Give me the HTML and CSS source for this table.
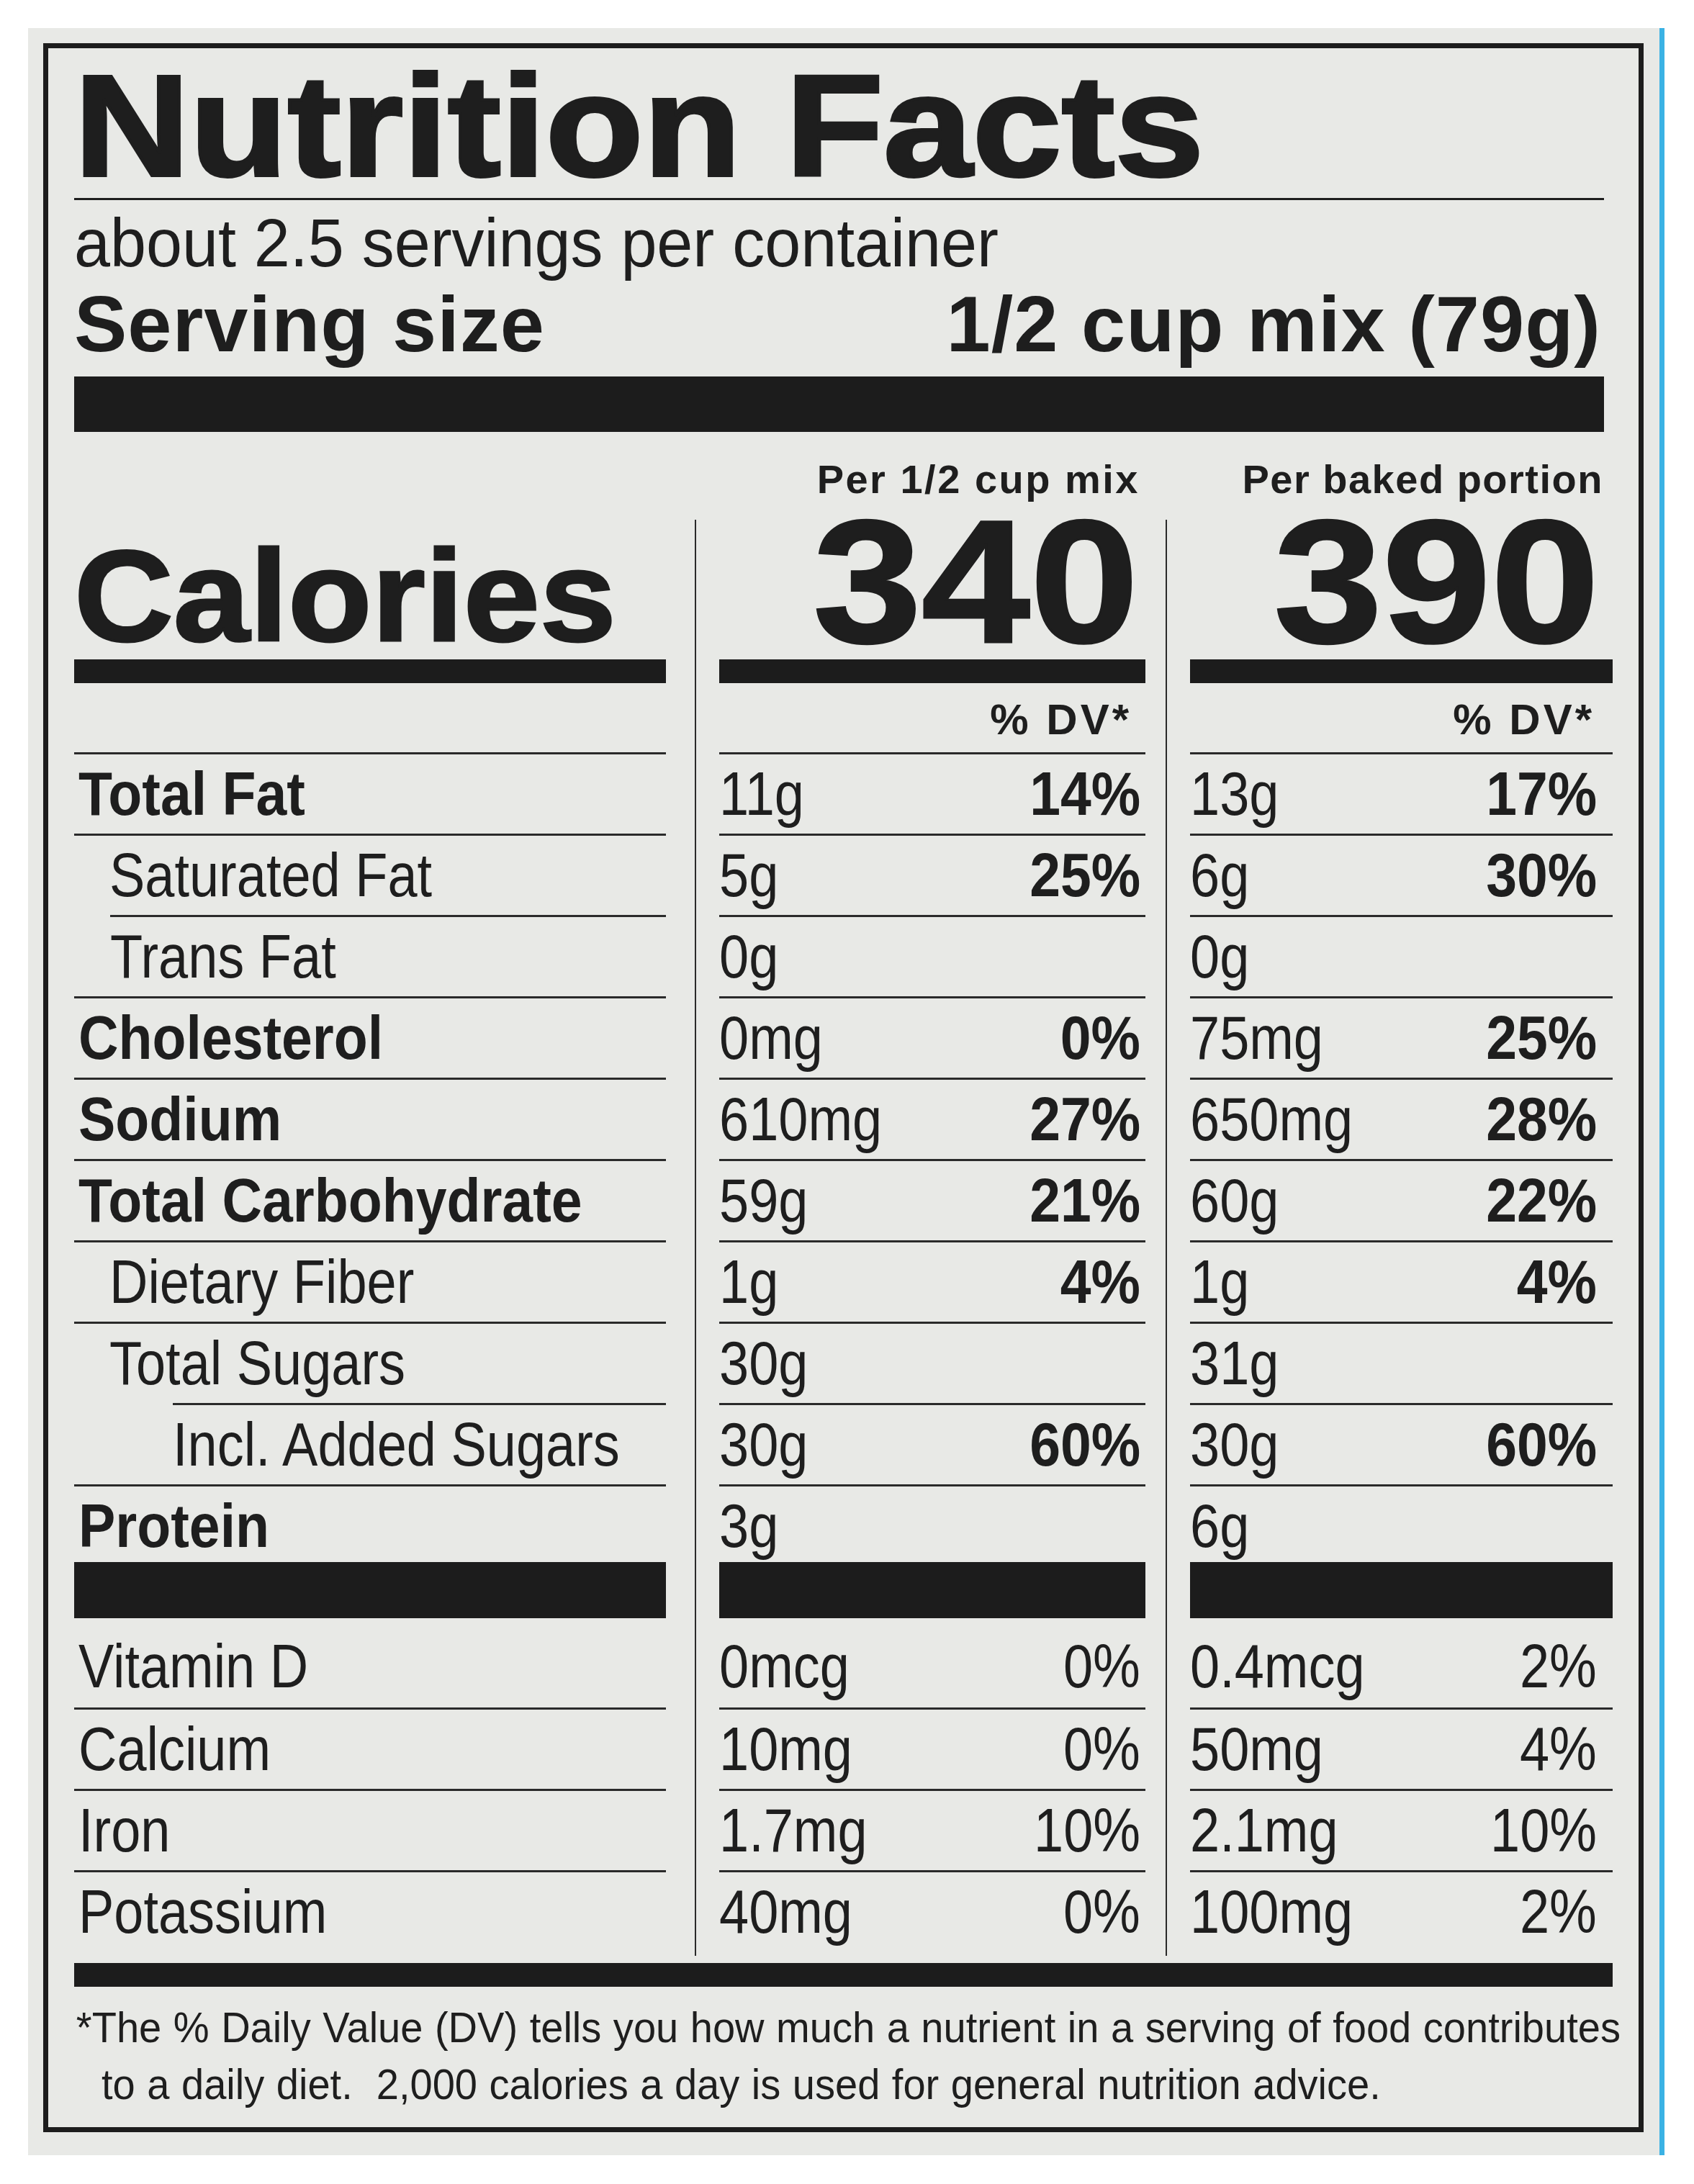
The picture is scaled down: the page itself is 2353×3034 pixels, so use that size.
FILE: index.html
```html
<!DOCTYPE html>
<html lang="en">
<head>
<meta charset="utf-8">
<title>Nutrition Facts</title>
<link rel="stylesheet" href="styles.css">
</head>
<body>
<div class="panel">
  <div class="card">
    <div class="top">
      <h1 class="title"><span class="wide">Nutrition Facts</span></h1>
      <div class="servings"><span class="t sv">about 2.5 servings per container</span></div>
      <div class="size"><span>Serving size</span><span>1/2 cup mix (79g)</span></div>
      <div class="bar bar-xl"></div>
    </div>

    <div class="cols head">
      <div class="c1"></div>
      <div class="c2"><div class="per">Per 1/2 cup mix</div></div>
      <div class="c3"><div class="per">Per baked portion</div></div>
    </div>

    <div class="cols body">
      <div class="c1">
        <div class="calw"><span class="wide cw">Calories</span></div>
        <div class="bar bar-m"></div>
        <div class="dv"></div>
        <div class="row"><span class="t b">Total Fat</span></div>
        <div class="row l1"><span class="t">Saturated Fat</span></div>
        <div class="row r1"><span class="t">Trans Fat</span></div>
        <div class="row"><span class="t b">Cholesterol</span></div>
        <div class="row"><span class="t b">Sodium</span></div>
        <div class="row"><span class="t b">Total Carbohydrate</span></div>
        <div class="row l1"><span class="t">Dietary Fiber</span></div>
        <div class="row l1"><span class="t">Total Sugars</span></div>
        <div class="row r2"><span class="t">Incl. Added Sugars</span></div>
        <div class="row protein"><span class="t b">Protein</span></div>
        <div class="bar bar-l"></div>
        <div class="row vfirst"><span class="t">Vitamin D</span></div>
        <div class="row"><span class="t">Calcium</span></div>
        <div class="row"><span class="t">Iron</span></div>
        <div class="row"><span class="t">Potassium</span></div>
      </div>

      <div class="c2">
        <div class="cal"><span class="wide num">340</span></div>
        <div class="bar bar-m"></div>
        <div class="dv">% DV*</div>
        <div class="row"><span class="t">11g</span><span class="t b r">14%</span></div>
        <div class="row"><span class="t">5g</span><span class="t b r">25%</span></div>
        <div class="row"><span class="t">0g</span></div>
        <div class="row"><span class="t">0mg</span><span class="t b r">0%</span></div>
        <div class="row"><span class="t">610mg</span><span class="t b r">27%</span></div>
        <div class="row"><span class="t">59g</span><span class="t b r">21%</span></div>
        <div class="row"><span class="t">1g</span><span class="t b r">4%</span></div>
        <div class="row"><span class="t">30g</span></div>
        <div class="row"><span class="t">30g</span><span class="t b r">60%</span></div>
        <div class="row protein"><span class="t">3g</span></div>
        <div class="bar bar-l"></div>
        <div class="row vfirst"><span class="t">0mcg</span><span class="t r">0%</span></div>
        <div class="row"><span class="t">10mg</span><span class="t r">0%</span></div>
        <div class="row"><span class="t">1.7mg</span><span class="t r">10%</span></div>
        <div class="row"><span class="t">40mg</span><span class="t r">0%</span></div>
      </div>

      <div class="c3">
        <div class="cal"><span class="wide num">390</span></div>
        <div class="bar bar-m"></div>
        <div class="dv">% DV*</div>
        <div class="row"><span class="t">13g</span><span class="t b r">17%</span></div>
        <div class="row"><span class="t">6g</span><span class="t b r">30%</span></div>
        <div class="row"><span class="t">0g</span></div>
        <div class="row"><span class="t">75mg</span><span class="t b r">25%</span></div>
        <div class="row"><span class="t">650mg</span><span class="t b r">28%</span></div>
        <div class="row"><span class="t">60g</span><span class="t b r">22%</span></div>
        <div class="row"><span class="t">1g</span><span class="t b r">4%</span></div>
        <div class="row"><span class="t">31g</span></div>
        <div class="row"><span class="t">30g</span><span class="t b r">60%</span></div>
        <div class="row protein"><span class="t">6g</span></div>
        <div class="bar bar-l"></div>
        <div class="row vfirst"><span class="t">0.4mcg</span><span class="t r">2%</span></div>
        <div class="row"><span class="t">50mg</span><span class="t r">4%</span></div>
        <div class="row"><span class="t">2.1mg</span><span class="t r">10%</span></div>
        <div class="row"><span class="t">100mg</span><span class="t r">2%</span></div>
      </div>
    </div>

    <div class="bar bar-m bottom"></div>
    <p class="foot">*The % Daily Value (DV) tells you how much a nutrient in a serving of food contributes<br>to a daily diet.&nbsp; 2,000 calories a day is used for general nutrition advice.</p>
  </div>
</div>
</body>
</html>
```

FILE: styles.css
```css
* {
  box-sizing: border-box;
}

html, body {
  margin: 0;
  padding: 0;
  background: #ffffff;
}

body {
  font-family: "Liberation Sans", Arial, sans-serif;
  color: #1e1e1e;
}

.panel {
  margin: 39px 0 0 39px;
  width: 2273px;
  height: 2955px;
  padding: 21px 0 0 21px;
  background: #e8e9e6;
  border-right: 7px solid #3bb2e4;
}

.card {
  width: 2223px;
  border: 7px solid #1d1d1d;
  padding: 8px 36px 19px 36px;
}

.top {
  margin-right: 12px;
}

/* horizontally widened heavy display text */
.wide {
  display: inline-block;
  transform-origin: left center;
  white-space: nowrap;
}

.title {
  margin: 0;
  height: 203px;
  font-weight: bold;
  font-size: 200px;
  line-height: 200px;
  border-bottom: 3px solid #1e1e1e;
  white-space: nowrap;
}

.title .wide {
  transform: scaleX(1.112);
  -webkit-text-stroke: 4px #1e1e1e;
}

/* condensed text */
.t {
  display: inline-block;
  transform: scaleX(0.87);
  transform-origin: left center;
  white-space: nowrap;
}

.t.b {
  font-weight: bold;
  transform: scaleX(0.905);
}

.t.r {
  transform-origin: right center;
}

.servings {
  margin-top: 7px;
  font-size: 95px;
  line-height: 104px;
  white-space: nowrap;
}

.t.sv {
  transform: scaleX(0.946);
}

.size {
  margin-top: 6px;
  display: flex;
  justify-content: space-between;
  font-weight: bold;
  font-size: 110px;
  line-height: 110px;
  letter-spacing: 1px;
  padding-right: 4px;
  white-space: nowrap;
}

.bar {
  background: #1c1c1c;
}

.bar-xl {
  margin-top: 18px;
  height: 77px;
}

.bar-l {
  height: 78px;
}

.bar-m {
  height: 33px;
}

.bottom {
  margin-top: 10px;
}

.cols {
  display: flex;
}

.c1 {
  width: 822px;
  flex: none;
}

.c2 {
  flex: none;
  width: 626px;
  margin-left: 40px;
  border-left: 2px solid #2a2a2a;
  padding-left: 32px;
}

.c3 {
  flex: 1;
  margin-left: 28px;
  border-left: 2px solid #2a2a2a;
  padding-left: 32px;
}

.head {
  height: 122px;
  padding-top: 36px;
}

.head .c2,
.head .c3 {
  border-left-color: transparent;
}

.per {
  font-weight: bold;
  font-size: 56px;
  line-height: 60px;
  letter-spacing: 1.5px;
  text-align: right;
  white-space: nowrap;
}

.c2 .per {
  letter-spacing: 2.5px;
  padding-right: 8px;
}

.c3 .per {
  padding-right: 13px;
}

.body > div {
  padding-bottom: 6px;
}

.calw {
  height: 194px;
  padding-top: 18px;
  font-weight: bold;
  font-size: 180px;
  line-height: 176px;
  white-space: nowrap;
}

.calw .cw {
  transform: scaleX(1.06);
  -webkit-text-stroke: 3px #1e1e1e;
}

.cal {
  height: 194px;
  font-weight: bold;
  font-size: 243px;
  line-height: 172px;
  text-align: right;
  white-space: nowrap;
}

.cal .num {
  transform: scaleX(1.115);
  transform-origin: right center;
  -webkit-text-stroke: 3px #1e1e1e;
}

.c2 .cal {
  padding-right: 10px;
}

.c3 .cal {
  padding-right: 19px;
}

.dv {
  height: 96px;
  padding-top: 5px;
  font-weight: bold;
  font-size: 60px;
  line-height: 91px;
  letter-spacing: 4px;
  text-align: right;
  white-space: nowrap;
}

.c2 .dv {
  padding-right: 19px;
}

.c3 .dv {
  padding-right: 25px;
}

.row {
  height: 113px;
  border-top: 3px solid #2a2a2a;
  font-size: 85px;
  line-height: 110px;
  padding-left: 6px;
  white-space: nowrap;
}

.c2 .row,
.c3 .row {
  display: flex;
  justify-content: space-between;
  padding-left: 0;
}

.c2 .row {
  padding-right: 7px;
}

.c3 .row {
  padding-right: 22px;
}

.l1 {
  padding-left: 49px;
}

.r1 {
  margin-left: 50px;
  padding-left: 0;
}

.r2 {
  margin-left: 137px;
  padding-left: 0;
}

.protein {
  height: 108px;
}

.vfirst {
  border-top: 0;
  height: 124px;
  padding-top: 12px;
}

.foot {
  margin: 0;
  width: 100%;
  padding: 18px 0 0 40px;
  text-indent: -37px;
  font-size: 59px;
  line-height: 79px;
  word-spacing: 1px;
  white-space: nowrap;
  transform: scaleX(0.95);
  transform-origin: left center;
}
```
